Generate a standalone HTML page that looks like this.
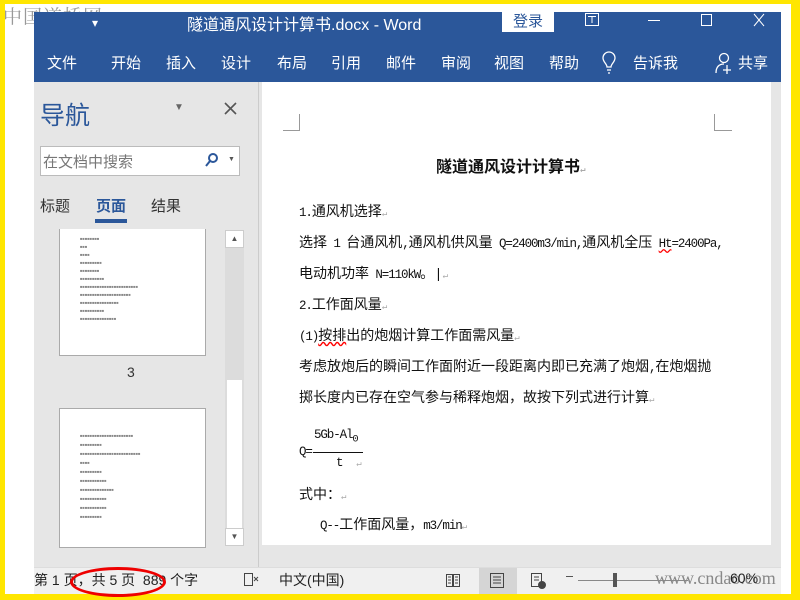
<!DOCTYPE html>
<html><head><meta charset="utf-8"><style>
*{margin:0;padding:0;box-sizing:border-box}
body{width:800px;height:600px;background:#ffe600;position:relative;overflow:hidden;font-family:"Liberation Sans","Noto Sans CJK SC",sans-serif}
.a{position:absolute}
.win{left:5px;top:4px;width:786px;height:590px;background:#fff}
.blue{background:#2b579a;color:#fff}
.rib span{position:absolute;top:52px;font-size:15px;color:#fff}
.doc{font-family:"Liberation Mono","Noto Sans CJK SC",monospace;font-size:14px;color:#111;position:absolute;left:299px;white-space:nowrap}
.doc i{font-style:normal;font-size:12.5px;letter-spacing:-1.1px}
.st{position:absolute;top:570px;font-size:14px;color:#222}
.tl{position:absolute;background:#999;height:1px}
.rt{font-size:9px;color:#aaa}
</style></head><body>
<div class="a win"></div>
<div class="a" style="left:3px;top:2px;font-size:19px;color:#999;letter-spacing:1px;font-family:'Noto Serif CJK SC',serif">中国道桥网</div>
<div class="a blue" style="left:34px;top:12px;width:747px;height:70px"></div>
<div class="a" style="left:92px;top:16px;color:#fff;font-size:12px">▾</div>
<div class="a" style="left:187px;top:11px;color:#fff;font-size:16px">隧道通风设计计算书.docx - Word</div>
<div class="a" style="left:502px;top:12px;width:52px;height:20px;background:#fff;color:#2b579a;font-size:15px;text-align:center;line-height:19px">登录</div>
<svg class="a" style="left:560px;top:10px" width="221" height="24" fill="none" stroke="#fff" stroke-width="1">
<rect x="25.5" y="3.5" width="13" height="12"/><path d="M28 6.5h8M32 7v6"/>
<path d="M88 10.5h12"/>
<rect x="141.5" y="4.5" width="10" height="11"/>
<path d="M194 4l10 12M204 4l-10 12"/>
</svg>
<div class="rib">
<span style="left:47px">文件</span><span style="left:111px">开始</span><span style="left:166px">插入</span><span style="left:221px">设计</span><span style="left:277px">布局</span><span style="left:331px">引用</span><span style="left:386px">邮件</span><span style="left:441px">审阅</span><span style="left:494px">视图</span><span style="left:549px">帮助</span><span style="left:633px">告诉我</span><span style="left:738px">共享</span>
</div>
<svg class="a" style="left:600px;top:50px" width="140" height="26" fill="none" stroke="#fff" stroke-width="1.3">
<path d="M7 17c0-3-4-5-4-9a6 6 0 0 1 12 0c0 4-4 6-4 9zM7 20h4M8 23h2"/>
<circle cx="124" cy="8" r="4.5"/><path d="M116 23c0-6 3-9 8-9M127 15v9M123 20h8"/>
</svg>
<!-- nav -->
<div class="a" style="left:34px;top:82px;width:225px;height:485px;background:#e6e6e6"></div>
<div class="a" style="left:258px;top:82px;width:4px;height:485px;background:#e6e6e6;border-left:1px solid #ccc"></div>
<div class="a" style="left:40px;top:96px;font-size:25px;color:#2b579a">导航</div>
<div class="a" style="left:174px;top:102px;font-size:10px;color:#666">▼</div>
<svg class="a" style="left:224px;top:102px" width="14" height="14" stroke="#555" stroke-width="1.6"><path d="M1 1l11 11M12 1L1 12"/></svg>
<div class="a" style="left:40px;top:146px;width:200px;height:30px;background:#fff;border:1px solid #bbb;font-size:15px;color:#777;padding:4px 2px">在文档中搜索</div>
<svg class="a" style="left:204px;top:152px" width="16" height="16" fill="none" stroke="#2b579a" stroke-width="2"><circle cx="9" cy="6" r="4"/><path d="M6 9l-4 5"/></svg>
<div class="a" style="left:228px;top:156px;font-size:7px;color:#555">▼</div>
<div class="a" style="left:40px;top:195px;font-size:15px;color:#333">标题</div>
<div class="a" style="left:96px;top:195px;font-size:15px;color:#2b579a;font-weight:bold">页面</div>
<div class="a" style="left:95px;top:219px;width:32px;height:4px;background:#2b579a"></div>
<div class="a" style="left:151px;top:195px;font-size:15px;color:#333">结果</div>
<div class="a" style="left:59px;top:229px;width:147px;height:127px;background:#fff;border:1px solid #aaa;border-top:none;font-size:4px;color:#888;padding:6px 20px;line-height:8px">■■■■■■■■<br>■■■<br>■■■■<br>■■■■■■■■■<br>■■■■■■■■<br>■■■■■■■■■■<br>■■■■■■■■■■■■■■■■■■■■■■■■<br>■■■■■■■■■■■■■■■■■■■■■<br>■■■■■■■■■■■■■■■■<br>■■■■■■■■■■<br>■■■■■■■■■■■■■■■</div>
<div class="a" style="left:127px;top:364px;font-size:14px;color:#333">3</div>
<div class="a" style="left:59px;top:408px;width:147px;height:140px;background:#fff;border:1px solid #aaa;font-size:4px;color:#888;padding:22px 20px;line-height:9px">■■■■■■■■■■■■■■■■■■■■■■<br>■■■■■■■■■<br>■■■■■■■■■■■■■■■■■■■■■■■■■<br>■■■■<br>■■■■■■■■■<br>■■■■■■■■■■■<br>■■■■■■■■■■■■■■<br>■■■■■■■■■■■<br>■■■■■■■■■■■<br>■■■■■■■■■</div>
<div class="a" style="left:225px;top:230px;width:19px;height:316px;background:#dcdcdc"></div>
<div class="a" style="left:225px;top:230px;width:19px;height:18px;background:#fff;border:1px solid #ccc;font-size:8px;text-align:center;line-height:16px;color:#555">▲</div>
<div class="a" style="left:227px;top:380px;width:15px;height:150px;background:#fff"></div>
<div class="a" style="left:225px;top:528px;width:19px;height:18px;background:#fff;border:1px solid #ccc;font-size:8px;text-align:center;line-height:16px;color:#555">▼</div>
<!-- doc area -->
<div class="a" style="left:262px;top:82px;width:519px;height:485px;background:#e6e6e6"></div>
<div class="a" style="left:262px;top:82px;width:509px;height:463px;background:#fff"></div>
<div class="tl" style="left:283px;top:130px;width:17px"></div><div class="a" style="left:299px;top:114px;width:1px;height:17px;background:#999"></div>
<div class="tl" style="left:714px;top:130px;width:18px"></div><div class="a" style="left:714px;top:114px;width:1px;height:17px;background:#999"></div>
<div class="doc" style="left:436px;top:153px;font-size:16px;font-weight:bold">隧道通风设计计算书<span class="rt">↵</span></div>
<div class="doc" style="top:201px"><i>1.</i>通风机选择<span class="rt">↵</span></div>
<div class="doc" style="top:232px">选择<i> 1 </i>台通风机<i>,</i>通风机供风量<i> Q=2400m3/min,</i>通风机全压<i> <u style="text-decoration:underline wavy red">Ht</u>=2400Pa,</i></div>
<div class="doc" style="top:263px">电动机功率<i> N=110kW</i>。<span style="font-weight:100">|</span><span class="rt">↵</span></div>
<div class="doc" style="top:294px"><i>2.</i>工作面风量<span class="rt">↵</span></div>
<div class="doc" style="top:325px"><i>(1)</i><u style="text-decoration:underline wavy red">按排</u>出的炮烟计算工作面需风量<span class="rt">↵</span></div>
<div class="doc" style="top:356px">考虑放炮后的瞬间工作面附近一段距离内即已充满了炮烟<i>,</i>在炮烟抛</div>
<div class="doc" style="top:387px">掷长度内已存在空气参与稀释炮烟，故按下列式进行计算<span class="rt">↵</span></div>
<div class="doc" style="left:314px;top:427px"><i>5Gb-Al<sub>0</sub></i></div>
<div class="doc" style="top:444px"><i>Q=</i></div>
<div class="a" style="left:313px;top:452px;width:50px;height:1px;background:#111"></div>
<div class="doc" style="left:336px;top:455px"><i>t</i> <span class="rt">&nbsp;↵</span></div>
<div class="doc" style="top:484px">式中：<span class="rt">↵</span></div>
<div class="doc" style="left:320px;top:514px"><i>Q--</i>工作面风量，<i>m3/min</i><span class="rt">↵</span></div>
<!-- status -->
<div class="a" style="left:34px;top:567px;width:747px;height:27px;background:#f0f0f0;border-top:1px solid #ddd"></div>
<div class="st" style="left:34px">第 1 页，共 5 页 &nbsp;889 个字</div>
<svg class="a" style="left:243px;top:572px" width="18" height="16" fill="none" stroke="#444"><rect x="1.5" y="1.5" width="8" height="12"/><path d="M11 5l4 4M15 5l-4 4"/></svg>
<div class="st" style="left:279px">中文(中国)</div>
<svg class="a" style="left:444px;top:572px" width="110" height="18" fill="none" stroke="#444">
<path d="M2.5 2.5h6v12h-6zM9.5 2.5h6v12h-6zM4 5h3M4 8h3M4 11h3M11 5h3M11 8h3M11 11h3"/>
</svg>
<div class="a" style="left:479px;top:568px;width:38px;height:26px;background:#d5d5d5"></div>
<svg class="a" style="left:488px;top:572px" width="20" height="18" fill="none" stroke="#444"><rect x="2.5" y="1.5" width="13" height="14"/><path d="M5 5h8M5 8h8M5 11h8"/></svg>
<svg class="a" style="left:529px;top:572px" width="20" height="18" fill="none" stroke="#444"><rect x="2.5" y="1.5" width="10" height="13"/><path d="M5 5h5M5 8h5"/><circle cx="13" cy="13" r="3.5" fill="#444"/></svg>
<div class="a" style="left:566px;top:576px;width:7px;height:1px;background:#555"></div>
<div class="a" style="left:578px;top:580px;width:110px;height:1px;background:#888"></div>
<div class="a" style="left:613px;top:573px;width:4px;height:14px;background:#555"></div>
<div class="st" style="left:655px;font-family:'Liberation Serif',serif;font-size:18px;color:#888;top:568px">www.cndao.com</div>
<div class="st" style="left:730px">60%</div>
<div class="a" style="left:70px;top:567px;width:96px;height:30px;border:3px solid #e00;border-radius:50%"></div>
</body></html>
